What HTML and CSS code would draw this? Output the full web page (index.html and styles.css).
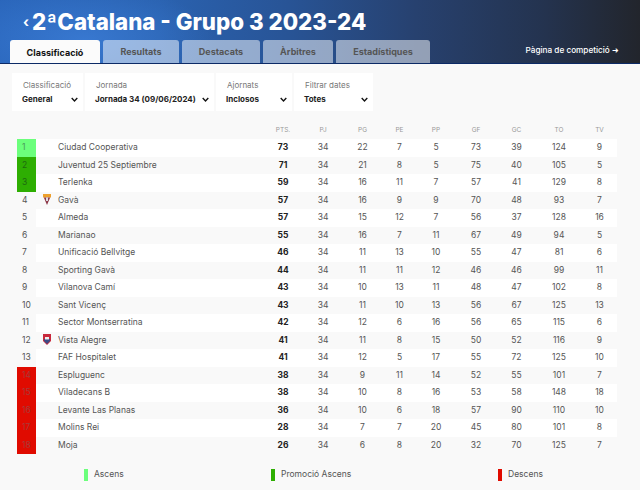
FILE: index.html
```html
<!DOCTYPE html>
<html lang="ca">
<head>
<meta charset="utf-8">
<title>2ªCatalana - Grupo 3 2023-24</title>
<link rel="stylesheet" href="styles.css">
</head>
<body>
<header class="hero">
  <h1 class="title"><span class="back">‹</span>2ªCatalana - Grupo 3 2023-24</h1>
  <nav class="tabs">
    <a class="tab active t1">Classificació</a>
    <a class="tab t2">Resultats</a>
    <a class="tab t3">Destacats</a>
    <a class="tab t4">Àrbitres</a>
    <a class="tab t5">Estadístiques</a>
    <a class="comp">Pàgina de competició ➜</a>
  </nav>
</header>
<section class="filters">
  <div class="filter f1"><span class="flabel">Classificació</span><span class="fvalue">General<svg class="chev" viewBox="0 0 10 6"><path d="M1 1l4 4 4-4"/></svg></span></div>
  <div class="filter f2"><span class="flabel">Jornada</span><span class="fvalue">Jornada 34 (09/06/2024)<svg class="chev" viewBox="0 0 10 6"><path d="M1 1l4 4 4-4"/></svg></span></div>
  <div class="filter f3"><span class="flabel">Ajornats</span><span class="fvalue">Inclosos<svg class="chev" viewBox="0 0 10 6"><path d="M1 1l4 4 4-4"/></svg></span></div>
  <div class="filter f4"><span class="flabel">Filtrar dates</span><span class="fvalue">Totes<svg class="chev" viewBox="0 0 10 6"><path d="M1 1l4 4 4-4"/></svg></span></div>
</section>
<table class="standings">
  <colgroup>
    <col class="c-pos"><col class="c-logo"><col class="c-name"><col class="c-pts"><col class="c-pj"><col class="c-pg"><col class="c-pe"><col class="c-pp"><col class="c-gf"><col class="c-gc"><col class="c-to"><col class="c-tv">
  </colgroup>
  <thead>
    <tr><th></th><th></th><th></th><th>PTS.</th><th>PJ</th><th>PG</th><th>PE</th><th>PP</th><th>GF</th><th>GC</th><th>TO</th><th>TV</th></tr>
  </thead>
  <tbody>
    <tr><td class="pos up">1</td><td></td><td class="name">Ciudad Cooperativa</td><td class="pts">73</td><td>34</td><td>22</td><td>7</td><td>5</td><td>73</td><td>39</td><td>124</td><td>9</td></tr>
    <tr><td class="pos promo">2</td><td></td><td class="name">Juventud 25 Septiembre</td><td class="pts">71</td><td>34</td><td>21</td><td>8</td><td>5</td><td>75</td><td>40</td><td>105</td><td>5</td></tr>
    <tr><td class="pos promo">3</td><td></td><td class="name">Terlenka</td><td class="pts">59</td><td>34</td><td>16</td><td>11</td><td>7</td><td>57</td><td>41</td><td>129</td><td>8</td></tr>
    <tr><td class="pos">4</td><td class="logo"><svg class="crest" viewBox="0 0 8 11"><path fill="#eda02c" d="M0 0h8v3.5H0z"/><path fill="#8e3a4a" d="M.8 3.5h6.4L4 11z"/><path fill="#dcdce4" d="M3 3.5h2v3.5H3z"/></svg></td><td class="name">Gavà</td><td class="pts">57</td><td>34</td><td>16</td><td>9</td><td>9</td><td>70</td><td>48</td><td>93</td><td>7</td></tr>
    <tr><td class="pos">5</td><td></td><td class="name">Almeda</td><td class="pts">57</td><td>34</td><td>15</td><td>12</td><td>7</td><td>56</td><td>37</td><td>128</td><td>16</td></tr>
    <tr><td class="pos">6</td><td></td><td class="name">Marianao</td><td class="pts">55</td><td>34</td><td>16</td><td>7</td><td>11</td><td>67</td><td>49</td><td>94</td><td>5</td></tr>
    <tr><td class="pos">7</td><td></td><td class="name">Unificació Bellvitge</td><td class="pts">46</td><td>34</td><td>11</td><td>13</td><td>10</td><td>55</td><td>47</td><td>81</td><td>6</td></tr>
    <tr><td class="pos">8</td><td></td><td class="name">Sporting Gavà</td><td class="pts">44</td><td>34</td><td>11</td><td>11</td><td>12</td><td>46</td><td>46</td><td>99</td><td>11</td></tr>
    <tr><td class="pos">9</td><td></td><td class="name">Vilanova Camí</td><td class="pts">43</td><td>34</td><td>10</td><td>13</td><td>11</td><td>48</td><td>47</td><td>102</td><td>8</td></tr>
    <tr><td class="pos">10</td><td></td><td class="name">Sant Vicenç</td><td class="pts">43</td><td>34</td><td>11</td><td>10</td><td>13</td><td>56</td><td>67</td><td>125</td><td>13</td></tr>
    <tr><td class="pos">11</td><td></td><td class="name">Sector Montserratina</td><td class="pts">42</td><td>34</td><td>12</td><td>6</td><td>16</td><td>56</td><td>65</td><td>115</td><td>6</td></tr>
    <tr><td class="pos">12</td><td class="logo"><svg class="crest" viewBox="0 0 8 11"><path fill="#c8283c" d="M0 0h8v7L4 11 0 7z"/><path fill="#3a4a86" d="M1 5h6v2L4 10 1 7z"/><path fill="#eee" d="M2 3h4v2.5H2z"/></svg></td><td class="name">Vista Alegre</td><td class="pts">41</td><td>34</td><td>11</td><td>8</td><td>15</td><td>50</td><td>52</td><td>116</td><td>9</td></tr>
    <tr><td class="pos">13</td><td></td><td class="name">FAF Hospitalet</td><td class="pts">41</td><td>34</td><td>12</td><td>5</td><td>17</td><td>55</td><td>72</td><td>125</td><td>10</td></tr>
    <tr><td class="pos down">14</td><td></td><td class="name">Espluguenc</td><td class="pts">38</td><td>34</td><td>9</td><td>11</td><td>14</td><td>52</td><td>55</td><td>101</td><td>7</td></tr>
    <tr><td class="pos down">15</td><td></td><td class="name">Viladecans B</td><td class="pts">38</td><td>34</td><td>10</td><td>8</td><td>16</td><td>53</td><td>58</td><td>148</td><td>18</td></tr>
    <tr><td class="pos down">16</td><td></td><td class="name">Levante Las Planas</td><td class="pts">36</td><td>34</td><td>10</td><td>6</td><td>18</td><td>57</td><td>90</td><td>110</td><td>10</td></tr>
    <tr><td class="pos down">17</td><td></td><td class="name">Molins Rei</td><td class="pts">28</td><td>34</td><td>7</td><td>7</td><td>20</td><td>45</td><td>80</td><td>101</td><td>8</td></tr>
    <tr><td class="pos down">18</td><td></td><td class="name">Moja</td><td class="pts">26</td><td>34</td><td>6</td><td>8</td><td>20</td><td>32</td><td>70</td><td>125</td><td>7</td></tr>
  </tbody>
</table>
<footer class="legend">
  <span class="key k1"><i class="mark m-up"></i>Ascens</span>
  <span class="key k2"><i class="mark m-promo"></i>Promoció Ascens</span>
  <span class="key k3"><i class="mark m-down"></i>Descens</span>
</footer>
</body>
</html>
```
FILE: styles.css
```css
* { box-sizing: border-box; }
html, body { margin: 0; height: 490px; overflow: hidden; }
body { background: #f9f9f9; font-family: Inter, "Liberation Sans", sans-serif; color: #444; font-size: 8.5px; }

.hero {
  height: 64px;
  background:
    radial-gradient(ellipse 130px 55px at 85px 40px, rgba(70,140,235,.5), transparent),
    linear-gradient(90deg, #2a66bb 0%, #2a62b0 25%, #285496 45%, #27416f 65%, #24334f 85%, #22252c 100%);
  border-bottom: 1px solid #0c2a66;
  display: flex;
  flex-direction: column;
  overflow: hidden;
}
.title {
  margin: 0;
  height: 40px;
  padding: 4px 0 0 23px;
  font-size: 22.3px;
  line-height: 36px;
  font-weight: 800;
  color: #fff;
  white-space: nowrap;
}
.back { display: inline-block; width: 9px; font-size: 14px; font-weight: 700; vertical-align: 3px; }

.tabs { display: flex; height: 24px; padding-left: 10px; align-items: stretch; }
.tab {
  display: flex; align-items: center; justify-content: center;
  margin-right: 3px;
  border-radius: 3px 3px 0 0;
  background: rgba(255,255,255,.5);
  color: #555;
  font-weight: 700;
  font-size: 9px;
}
.tab.active { background: #fbfbfb; color: #111; margin-bottom: -1px; }
.t1 { width: 90px; }
.t2 { width: 76px; }
.t3 { width: 78px; }
.t4 { width: 70px; }
.t5 { width: 94px; }
.comp { margin-left: auto; margin-right: 21px; align-self: center; color: #fff; font-size: 8.2px; font-weight: 500; padding-top: 1px; padding-bottom: 4px; }

.filters { display: flex; gap: 2px; margin: 9px 0 0 12px; height: 38px; }
.filter { background: #fff; display: flex; flex-direction: column; padding: 7px 5px 0 10px; }
.f1 { width: 71px; }
.f2 { width: 129px; }
.f3 { width: 76px; }
.f4 { width: 79px; }
.flabel { font-size: 8px; line-height: 11px; color: #777; padding-left: 1px; }
.fvalue { display: flex; justify-content: space-between; align-items: center; margin-top: 3px; font-size: 8px; line-height: 11px; font-weight: 700; color: #222; }
.chev { width: 7px; height: 5px; fill: none; stroke: #111; stroke-width: 2; }

.standings { table-layout: fixed; border-collapse: collapse; width: 600px; margin: 10px 0 0 17px; }
.c-pos { width: 19px; } .c-logo { width: 22px; } .c-name { width: 205px; }
.c-pts { width: 40px; } .c-pj { width: 40px; } .c-pg { width: 39px; } .c-pe { width: 35px; }
.c-pp { width: 38px; } .c-gf { width: 42px; } .c-gc { width: 39px; } .c-to { width: 46px; } .c-tv { width: 35px; }
.standings th { height: 18px; padding: 0; font-size: 6.5px; font-weight: 400; color: #999; text-align: center; }
.standings td { height: 17.5px; padding: 0 0 1px; text-align: center; font-size: 8.5px; color: #555; white-space: nowrap; }
.standings tbody tr:nth-child(odd) { background: #fff; }
.standings td.name { text-align: left; color: #555; }
.standings td.pts { font-weight: 700; color: #222; }
.standings td.pos { text-align: left; padding-left: 5px; background: #f9f9f9; }
.standings td.up { background: #6cff7c; color: #4a9a58; }
.standings td.promo { background: #2eae02; color: #1d6a10; }
.standings td.down { background: #e00b00; color: #a83a3a; }
.logo { line-height: 0; }
.crest { width: 8px; height: 11px; margin-left: -1px; }

.legend { position: relative; height: 36px; font-size: 8.5px; color: #555; }
.key { position: absolute; top: 14px; display: flex; align-items: center; gap: 6px; line-height: 13px; white-space: nowrap; }
.k1 { left: 84px; } .k2 { left: 271px; } .k3 { left: 498px; }
.mark { display: block; width: 4px; height: 12px; }
.m-up { background: #6cff7c; } .m-promo { background: #2eae02; } .m-down { background: #e00b00; }
```
